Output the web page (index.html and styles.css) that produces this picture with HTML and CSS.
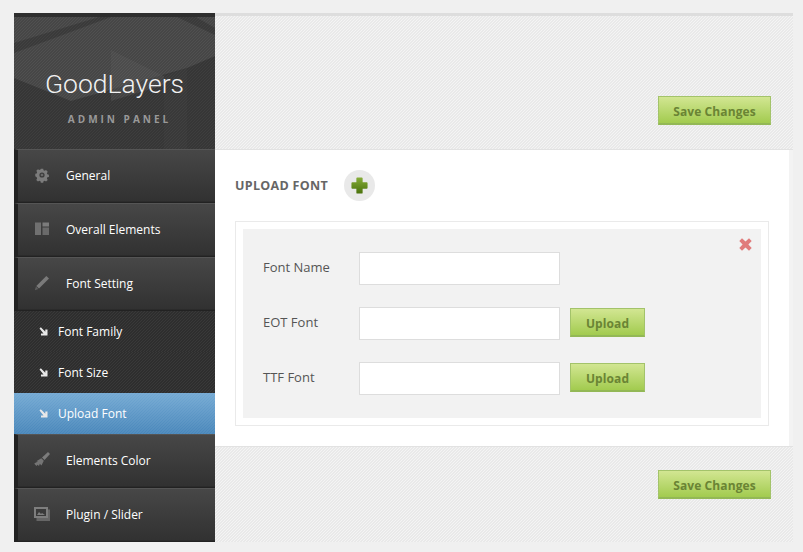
FILE: index.html
```html
<!DOCTYPE html>
<html lang="en">
<head>
<meta charset="utf-8">
<title>GoodLayers Admin Panel</title>
<link rel="stylesheet" href="styles.css">
</head>
<body>
<div class="shell">
  <aside class="sidebar">
    <header class="brand">
      <svg class="brand-art" width="201" height="132" viewBox="0 0 201 132" aria-hidden="true">
        <path d="M0 26 L85 0 L97 0 L0 36Z" fill="#2c2c2c" opacity=".38"/>
        <path d="M163 0 L182 0 L201 11 L201 18Z" fill="#2c2c2c" opacity=".38"/>
        <path d="M0 61 L57 84 L173 51 L201 39 L201 132 L0 132Z" fill="#262626" opacity=".42"/>
        <path d="M97 33 L150 59 L150 68 L97 84Z" fill="#5c5c5c" opacity=".5"/>
        <path d="M150 59 L173 51 L173 132 L150 132Z" fill="#4a4a4a" opacity=".25"/>
      </svg>
      <div class="brand-name">GoodLayers</div>
      <div class="brand-sub">ADMIN PANEL</div>
    </header>
    <nav class="nav">
      <a class="nav-item">
        <svg class="nav-icon" width="16" height="16" viewBox="-1.500 -1.500 19 19"><path fill-rule="evenodd" fill="#7c7c7c" d="M6.600 .6h2.800l.4 1.900 1.300.6 1.700-1 2 2-1 1.700.5 1.300 1.900.5v2.800l-1.900.4-.5 1.300 1 1.700-2 2-1.700-1-1.300.5-.4 1.900H6.600l-.4-1.900-1.300-.5-1.700 1-2-2 1-1.700-.5-1.300L0 9.400V6.600l1.700-.5.5-1.300-1-1.700 2-2 1.700 1 1.300-.6zM8 4.900a3.100 3.100 0 1 0 0 6.200 3.100 3.100 0 0 0 0-6.200z"/><circle cx="8" cy="8" r="1.600" fill="#6a6a6a"/></svg>
        <span>General</span>
      </a>
      <a class="nav-item">
        <svg class="nav-icon" width="16" height="16" viewBox="0 0 16 16"><path fill="#707070" d="M1 1.500h6v12.500H1z"/><path fill="#7c7c7c" d="M8.500 1.500H15v4H8.500z"/><path fill="#6a6a6a" d="M8.500 6.500H15V14H8.500z"/></svg>
        <span>Overall Elements</span>
      </a>
      <a class="nav-item">
        <svg class="nav-icon" width="16" height="16" viewBox="0 0 16 16"><path fill="#7a7a7a" d="M12.300 1 15 3.600 5 13.500 2.300 11z"/><path fill="#5e5e5e" d="M2 11.600 4.400 14 .8 15.300z"/></svg>
        <span>Font Setting</span>
      </a>
      <div class="subnav">
        <a class="sub-item"><svg class="sub-icon" width="9" height="9" viewBox="0 0 9 9"><path fill="#e8e8e8" d="M.5 1.500 1.800.3 6.300 4.800V2.600H8.500V8.500H2V6.600H4.500z"/></svg><span>Font Family</span></a>
        <a class="sub-item"><svg class="sub-icon" width="9" height="9" viewBox="0 0 9 9"><path fill="#e8e8e8" d="M.5 1.500 1.800.3 6.300 4.800V2.600H8.500V8.500H2V6.600H4.500z"/></svg><span>Font Size</span></a>
        <a class="sub-item is-active"><svg class="sub-icon" width="9" height="9" viewBox="0 0 9 9"><path fill="#e8e8e8" d="M.5 1.500 1.800.3 6.300 4.800V2.600H8.500V8.500H2V6.600H4.500z"/></svg><span>Upload Font</span></a>
      </div>
      <a class="nav-item">
        <svg class="nav-icon" width="16" height="16" viewBox="0 0 16 16"><path fill="#7c7c7c" d="M14 0 16 2 10.500 8 8 5.600z"/><path fill="#747474" d="M7.300 6.200 9.800 8.800 7.500 13.500 5.800 11.800 5 14 3.600 12.800 2.500 14 .3 11.800 1 11 4 9.500 2.300 9.200z"/></svg>
        <span>Elements Color</span>
      </a>
      <a class="nav-item">
        <svg class="nav-icon" width="16" height="16" viewBox="0 0 16 16"><path fill="#666" d="M2.500 3.500H16V15H2.500z"/><path fill="#7e7e7e" d="M0 1h14v11H0z"/><path fill="#3a3a3a" d="M2 3h10v7H2z"/><path fill="#7e7e7e" d="M3 9 5 6l2 2 1-1 3 2z"/></svg>
        <span>Plugin / Slider</span>
      </a>
    </nav>
  </aside>
  <main class="main">
    <div class="band band-top"><button class="btn btn-save" type="button">Save Changes</button></div>
    <section class="panel">
      <div class="panel-head">
        <h2 class="panel-title">UPLOAD FONT</h2>
        <span class="add-btn"><svg width="17" height="17" viewBox="0 0 19 19"><defs><linearGradient id="plus" x1="0" y1="0" x2="0" y2="1"><stop offset="0" stop-color="#86ad38"/><stop offset="1" stop-color="#4a720c"/></linearGradient></defs><path fill="url(#plus)" d="M6 1.500a1 1 0 0 1 1-1h5a1 1 0 0 1 1 1V6h4.500a1 1 0 0 1 1 1v5a1 1 0 0 1-1 1H13v4.500a1 1 0 0 1-1 1H7a1 1 0 0 1-1-1V13H1.500a1 1 0 0 1-1-1V7a1 1 0 0 1 1-1H6z"/></svg></span>
      </div>
      <div class="font-card">
        <div class="font-fields">
          <svg class="remove" width="13" height="13" viewBox="0 0 13 13"><path fill="#e07c7c" d="M3 .3 6.500 3.600 10 .3 12.700 3 9.400 6.500 12.700 10 10 12.700 6.500 9.400 3 12.700.3 10 3.600 6.500.3 3z"/></svg>
          <div class="field"><label class="field-label">Font Name</label><input class="field-input" type="text"></div>
          <div class="field"><label class="field-label">EOT Font</label><input class="field-input" type="text"><button class="btn btn-upload" type="button">Upload</button></div>
          <div class="field"><label class="field-label">TTF Font</label><input class="field-input" type="text"><button class="btn btn-upload" type="button">Upload</button></div>
        </div>
      </div>
    </section>
    <div class="band band-bottom"><button class="btn btn-save" type="button">Save Changes</button></div>
  </main>
</div>
</body>
</html>
```
FILE: styles.css
```css
* { box-sizing: border-box; }
html, body { margin: 0; padding: 0; }
body {
  width: 803px;
  height: 552px;
  overflow: hidden;
  background: #f0f0f0;
  font-family: "Open Sans", sans-serif;
  padding: 13px 10px 10px 14px;
}
.shell { display: flex; width: 779px; height: 529px; }

.sidebar { width: 201px; flex: none; display: flex; flex-direction: column; background: #333; }
.brand {
  position: relative;
  height: 136px;
  flex: none;
  overflow: hidden;
  border-top: 4px solid #2e2e2e;
  background-color: #505050;
  text-align: center;
  padding-top: 52px;
}
.brand::after {
  content: "";
  position: absolute;
  inset: 0;
  background-image: linear-gradient(135deg, rgba(0,0,0,.12) 25%, transparent 25%, transparent 50%, rgba(0,0,0,.12) 50%, rgba(0,0,0,.12) 75%, transparent 75%);
  background-size: 3px 3px;
}
.brand-art { position: absolute; left: 0; top: 0; }
.brand-name {
  position: relative;
  z-index: 1;
  font-family: Roboto, sans-serif;
  font-weight: 300;
  font-size: 26.500px;
  line-height: 30px;
  color: #f2f2f2;
}
.brand-sub {
  position: relative;
  z-index: 1;
  margin-top: 13px;
  padding-left: 10px;
  font-size: 10px;
  line-height: 14px;
  font-weight: 700;
  letter-spacing: 3px;
  color: #999;
}
.nav { display: flex; flex-direction: column; flex: 1; }
.nav-item {
  height: 54px;
  display: flex;
  align-items: center;
  padding: 0 0 2px 16px;
  border-left: 4px solid #222;
  border-top: 1px solid #555;
  border-bottom: 1px solid #222;
  background: linear-gradient(#474747, #313131);
  color: #fff;
  font-size: 12px;
  box-shadow: inset 0 -1px 0 #2b2b2b;
}
.nav-icon { flex: none; margin-right: 16px; }
.subnav { display: flex; flex-direction: column; }
.sub-item {
  height: 41px;
  display: flex;
  align-items: center;
  padding: 0 0 1px 25px;
  color: #fff;
  font-size: 12px;
  background-color: #393939;
  background-image: linear-gradient(135deg, rgba(0,0,0,.2) 25%, transparent 25%, transparent 50%, rgba(0,0,0,.2) 50%, rgba(0,0,0,.2) 75%, transparent 75%);
  background-size: 3px 3px;
}
.sub-icon { flex: none; margin-right: 10px; }
.sub-item.is-active {
  background-image:
    linear-gradient(135deg, rgba(255,255,255,.05) 25%, transparent 25%, transparent 50%, rgba(255,255,255,.05) 50%, rgba(255,255,255,.05) 75%, transparent 75%),
    linear-gradient(#73a9d3, #4886ba);
  background-size: 3px 3px, auto;
}

.main { flex: 1; display: flex; flex-direction: column; }
.band {
  background-color: #f4f4f4;
  background-image: linear-gradient(135deg, #e9e9e9 25%, transparent 25%, transparent 50%, #e9e9e9 50%, #e9e9e9 75%, transparent 75%);
  background-size: 3px 3px;
  display: flex;
  justify-content: flex-end;
  padding-right: 22px;
}
.band-top {
  height: 137px;
  border-top: 3px solid #ddd;
  border-bottom: 1px solid #e2e2e2;
  padding-top: 80px;
}
.band-bottom {
  height: 96px;
  border-top: 1px solid #e2e2e2;
  padding-top: 23px;
}
.btn {
  height: 29px;
  padding: 2px 0 0;
  border: 1px solid #a3c36a;
  border-bottom: 2px solid #93b856;
  background: linear-gradient(#d2e692, #a2cb4f);
  color: #6a8434;
  font-family: "Open Sans", sans-serif;
  font-weight: 700;
  font-size: 12px;
  letter-spacing: .1px;
}
.btn-save { width: 113px; }
.btn-upload { width: 75px; margin: 0 0 2px 10px; padding-top: 3px; }

.panel {
  height: 296px;
  flex: none;
  background: #fff;
  border-right: 4px solid #f3f3f3;
  padding: 20px 20px 0;
}
.panel-head { display: flex; align-items: center; height: 31px; }
.panel-title {
  margin: 0 16px 0 0;
  font-size: 12.500px;
  font-weight: 700;
  letter-spacing: .3px;
  color: #666;
}
.add-btn {
  width: 31px;
  height: 31px;
  border-radius: 50%;
  background: #e9e9e9;
  display: flex;
  align-items: center;
  justify-content: center;
}
.font-card {
  margin-top: 20px;
  width: 534px;
  height: 205px;
  border: 1px solid #eaeaea;
  padding: 7px;
}
.font-fields {
  position: relative;
  height: 189px;
  background: #f2f2f2;
  padding: 23px 20px 0;
  display: flex;
  flex-direction: column;
  gap: 22px;
}
.remove { position: absolute; right: 9px; top: 9px; }
.field { display: flex; align-items: center; height: 33px; }
.field-label { width: 96px; flex: none; font-size: 13px; line-height: 16px; padding-bottom: 4px; color: #555; }
.field-input {
  width: 201px;
  height: 33px;
  border: 1px solid #ddd;
  background: #fff;
  padding: 0;
}
```
